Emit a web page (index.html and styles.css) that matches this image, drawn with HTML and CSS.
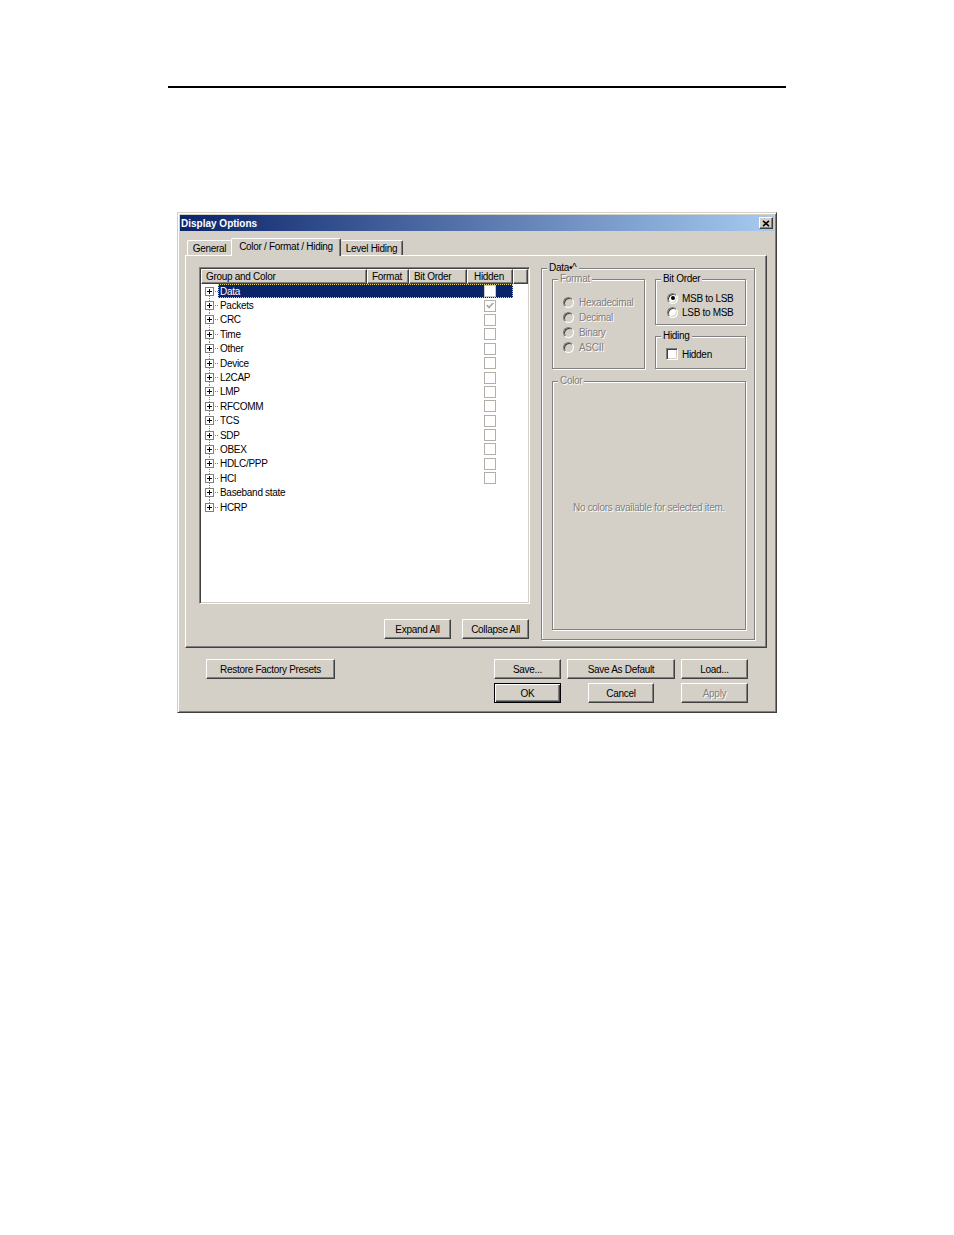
FILE: index.html
```html
<!DOCTYPE html>
<html>
<head>
<meta charset="utf-8">
<title>Display Options</title>
<link rel="stylesheet" href="styles.css">
</head>
<body>
<div class="page">
  <div class="rule"></div>
  <div class="dialog">
    <div class="titlebar">
      <span class="title">Display Options</span>
      <span class="close"><svg width="8" height="7" viewBox="0 0 8 7"><path d="M1 0.8L7 6.2M7 0.8L1 6.2" stroke="#000" stroke-width="1.6" fill="none"/></svg></span>
    </div>
    <div class="tabs">
      <div class="tab first">General</div>
      <div class="tab active">Color / Format / Hiding</div>
      <div class="tab last">Level Hiding</div>
    </div>
    <div class="panel">
      <div class="left">
        <div class="listview">
          <div class="lv-header">
            <div class="hcell h-name">Group and Color</div>
            <div class="hcell h-format">Format</div>
            <div class="hcell h-bit">Bit Order</div>
            <div class="hcell h-hidden">Hidden</div>
            <div class="hcell h-fill"></div>
          </div>
          <div class="lv-body">
            <div class="row first sel"><div class="tree"><span class="plus"></span><span class="hline"></span></div><div class="cells"><span class="lbl">Data</span><span class="c-format"></span><span class="c-bit"></span><span class="c-hidden"><span class="lcb"></span></span></div></div>
            <div class="row"><div class="tree"><span class="plus"></span><span class="hline"></span></div><div class="cells"><span class="lbl">Packets</span><span class="c-format"></span><span class="c-bit"></span><span class="c-hidden"><span class="lcb"><svg width="8" height="7" viewBox="0 0 8 7"><path d="M0.8 3.2L3 5.5L7.2 1" stroke="#a8a8a8" stroke-width="1.8" fill="none"/></svg></span></span></div></div>
            <div class="row"><div class="tree"><span class="plus"></span><span class="hline"></span></div><div class="cells"><span class="lbl">CRC</span><span class="c-format"></span><span class="c-bit"></span><span class="c-hidden"><span class="lcb"></span></span></div></div>
            <div class="row"><div class="tree"><span class="plus"></span><span class="hline"></span></div><div class="cells"><span class="lbl">Time</span><span class="c-format"></span><span class="c-bit"></span><span class="c-hidden"><span class="lcb"></span></span></div></div>
            <div class="row"><div class="tree"><span class="plus"></span><span class="hline"></span></div><div class="cells"><span class="lbl">Other</span><span class="c-format"></span><span class="c-bit"></span><span class="c-hidden"><span class="lcb"></span></span></div></div>
            <div class="row"><div class="tree"><span class="plus"></span><span class="hline"></span></div><div class="cells"><span class="lbl">Device</span><span class="c-format"></span><span class="c-bit"></span><span class="c-hidden"><span class="lcb"></span></span></div></div>
            <div class="row"><div class="tree"><span class="plus"></span><span class="hline"></span></div><div class="cells"><span class="lbl">L2CAP</span><span class="c-format"></span><span class="c-bit"></span><span class="c-hidden"><span class="lcb"></span></span></div></div>
            <div class="row"><div class="tree"><span class="plus"></span><span class="hline"></span></div><div class="cells"><span class="lbl">LMP</span><span class="c-format"></span><span class="c-bit"></span><span class="c-hidden"><span class="lcb"></span></span></div></div>
            <div class="row"><div class="tree"><span class="plus"></span><span class="hline"></span></div><div class="cells"><span class="lbl">RFCOMM</span><span class="c-format"></span><span class="c-bit"></span><span class="c-hidden"><span class="lcb"></span></span></div></div>
            <div class="row"><div class="tree"><span class="plus"></span><span class="hline"></span></div><div class="cells"><span class="lbl">TCS</span><span class="c-format"></span><span class="c-bit"></span><span class="c-hidden"><span class="lcb"></span></span></div></div>
            <div class="row"><div class="tree"><span class="plus"></span><span class="hline"></span></div><div class="cells"><span class="lbl">SDP</span><span class="c-format"></span><span class="c-bit"></span><span class="c-hidden"><span class="lcb"></span></span></div></div>
            <div class="row"><div class="tree"><span class="plus"></span><span class="hline"></span></div><div class="cells"><span class="lbl">OBEX</span><span class="c-format"></span><span class="c-bit"></span><span class="c-hidden"><span class="lcb"></span></span></div></div>
            <div class="row"><div class="tree"><span class="plus"></span><span class="hline"></span></div><div class="cells"><span class="lbl">HDLC/PPP</span><span class="c-format"></span><span class="c-bit"></span><span class="c-hidden"><span class="lcb"></span></span></div></div>
            <div class="row"><div class="tree"><span class="plus"></span><span class="hline"></span></div><div class="cells"><span class="lbl">HCI</span><span class="c-format"></span><span class="c-bit"></span><span class="c-hidden"><span class="lcb"></span></span></div></div>
            <div class="row"><div class="tree"><span class="plus"></span><span class="hline"></span></div><div class="cells"><span class="lbl">Baseband state</span></div></div>
            <div class="row last"><div class="tree"><span class="plus"></span><span class="hline"></span></div><div class="cells"><span class="lbl">HCRP</span></div></div>
          </div>
        </div>
        <div class="list-buttons">
          <button class="btn">Expand All</button>
          <button class="btn">Collapse All</button>
        </div>
      </div>
      <div class="group data-group">
        <span class="legend">Data•^</span>
        <div class="data-grid">
          <div class="group format-group disabled">
            <span class="legend">Format</span>
            <div class="opts">
              <div class="opt"><span class="radio"></span>Hexadecimal</div>
              <div class="opt"><span class="radio"></span>Decimal</div>
              <div class="opt"><span class="radio"></span>Binary</div>
              <div class="opt"><span class="radio"></span>ASCII</div>
            </div>
          </div>
          <div class="group bit-group">
            <span class="legend">Bit Order</span>
            <div class="opts">
              <div class="opt"><span class="radio on"></span>MSB to LSB</div>
              <div class="opt"><span class="radio"></span>LSB to MSB</div>
            </div>
          </div>
          <div class="group hiding-group">
            <span class="legend">Hiding</span>
            <div class="opts">
              <div class="opt"><span class="check"></span>Hidden</div>
            </div>
          </div>
        </div>
        <div class="group color-group disabled">
          <span class="legend">Color</span>
          <div class="nocolor">No colors available for selected item.</div>
        </div>
      </div>
    </div>
    <div class="footer">
      <button class="btn b-restore">Restore Factory Presets</button>
      <button class="btn b-save">Save...</button>
      <button class="btn b-default">Save As Default</button>
      <button class="btn b-load">Load...</button>
      <button class="btn b-ok">OK</button>
      <button class="btn b-cancel">Cancel</button>
      <button class="btn b-apply" disabled>Apply</button>
    </div>
  </div>
</div>
</body>
</html>
```

FILE: styles.css
```css
* { box-sizing: border-box; }
body {
  margin: 0;
  background: #fff;
  font-family: "Liberation Sans", Arial, sans-serif;
  font-size: 10px;
  letter-spacing: -0.3px;
  color: #000;
}
.page { padding: 86px 0 0 168px; }
.rule { width: 618px; height: 2px; background: #000; }

.dialog {
  margin: 124px 0 0 9px;
  width: 600px;
  height: 501px;
  background: #d4d0c8;
  border: 1px solid;
  border-color: #d4d0c8 #404040 #404040 #d4d0c8;
  box-shadow: inset 1px 1px 0 #fff, inset -1px -1px 0 #808080;
  padding: 2px;
}
.titlebar {
  height: 16px;
  display: flex;
  align-items: center;
  justify-content: space-between;
  padding: 0 1px 0 1px;
  background: linear-gradient(to right, #0a246a, #a6caf0);
}
.title { color: #fff; font-weight: bold; letter-spacing: 0; }
.close {
  width: 14px; height: 12px;
  display: flex; align-items: center; justify-content: center;
  background: #d4d0c8;
  border: 1px solid;
  border-color: #fff #404040 #404040 #fff;
  box-shadow: inset -1px -1px 0 #808080;
}

.tabs { display: flex; align-items: flex-end; height: 17px; margin: 7px 0 0 7px; }
.tab {
  height: 15px;
  display: flex; align-items: center; justify-content: center;
  border: 1px solid;
  border-bottom: 0;
  border-color: #fff #404040 transparent #fff;
  border-radius: 2px 2px 0 0;
  box-shadow: inset -1px 0 0 #808080;
}
.tab.first { width: 44px; border-right: 0; box-shadow: none; }
.tab.active {
  width: 110px; height: 18px;
  margin-bottom: -1px;
  position: relative; z-index: 1;
  background: #d4d0c8;
  padding-bottom: 2px;
}
.tab.last { width: 62px; border-left: 0; }

.panel {
  margin-left: 5px;
  width: 582px; height: 393px;
  border: 1px solid;
  border-color: #fff #404040 #404040 #fff;
  box-shadow: inset -1px -1px 0 #808080;
  padding: 11px 0 0 13px;
  display: flex;
  align-items: flex-start;
}
.left { display: flex; flex-direction: column; }

.listview {
  width: 331px; height: 337px;
  background: #fff;
  border: 1px solid;
  border-color: #808080 #fff #fff #808080;
  box-shadow: inset 1px 1px 0 #404040, inset -1px -1px 0 #d4d0c8;
  padding: 1px;
}
.lv-header { display: flex; height: 15px; }
.hcell {
  height: 15px;
  background: #d4d0c8;
  border: 1px solid;
  border-color: #fff #404040 #404040 #fff;
  box-shadow: inset -1px -1px 0 #808080;
  padding-left: 4px;
  display: flex; align-items: center;
  white-space: nowrap;
}
.h-name { width: 166px; }
.h-format { width: 42px; }
.h-bit { width: 58px; }
.h-hidden { width: 46px; padding-left: 6px; }
.h-fill { flex: 1; }

.row { display: flex; height: 14.4px; }
.tree {
  width: 17px;
  display: flex; align-items: center;
  padding-left: 4px;
  background: linear-gradient(#808080 1px, transparent 1px) 8px 0 / 1px 2px repeat-y;
}
.row.first .tree {
  background: linear-gradient(#fff, #fff) 0 0 / 100% 7px no-repeat,
              linear-gradient(#808080 1px, transparent 1px) 8px 0 / 1px 2px repeat-y;
}
.row.last .tree {
  background: linear-gradient(#fff, #fff) 0 100% / 100% 7px no-repeat,
              linear-gradient(#808080 1px, transparent 1px) 8px 0 / 1px 2px repeat-y;
}
.plus {
  width: 9px; height: 9px;
  border: 1px solid #808080;
  background: #fff;
  display: grid; place-items: center;
  flex: none;
}
.plus::before, .plus::after { content: ""; grid-area: 1 / 1; background: #000; }
.plus::before { width: 5px; height: 1px; }
.plus::after { width: 1px; height: 5px; }
.hline {
  width: 4px; height: 1px;
  background: linear-gradient(to right, #808080 1px, transparent 1px) 1px 0 / 2px 1px repeat-x;
}
.cells { display: flex; width: 295px; align-items: center; white-space: nowrap; }
.row.sel .cells {
  background: #0a246a;
  color: #fff;
  outline: 1px dotted #e6d67a;
  outline-offset: -1px;
}
.lbl { width: 149px; padding-left: 2px; }
.c-format { width: 42px; }
.c-bit { width: 58px; }
.c-hidden { width: 46px; display: flex; justify-content: center; }
.lcb {
  width: 12px; height: 12px;
  border: 1px solid #b4b0a8;
  background: #fff;
  display: flex; align-items: center; justify-content: center;
}
.row.sel .lcb { border-color: #c8c8c8; }

.list-buttons {
  display: flex; justify-content: flex-end; gap: 11px;
  margin-top: 15px; padding-right: 1px;
}
.list-buttons .btn { width: 67px; height: 20px; }

.btn {
  font: inherit;
  letter-spacing: inherit;
  color: #000;
  background: #d4d0c8;
  border: 1px solid;
  border-color: #fff #404040 #404040 #fff;
  box-shadow: inset -1px -1px 0 #808080;
  padding: 0;
  height: 20px;
  white-space: nowrap;
}
.btn:disabled { color: #808080; text-shadow: 1px 1px 0 #fff; }

.group {
  position: relative;
  border: 1px solid #808080;
  box-shadow: 1px 1px 0 #fff, inset 1px 1px 0 #fff;
}
.legend {
  position: absolute;
  top: -7px; left: 5px;
  padding: 0 2px;
  background: #d4d0c8;
  line-height: 12px;
  white-space: nowrap;
}
.data-group {
  width: 214px; height: 372px;
  margin: 1px 0 0 11px;
  padding: 10px 0 0 10px;
}
.data-grid {
  display: grid;
  grid-template-columns: 93px 91px;
  grid-template-rows: 46px 33px;
  column-gap: 10px;
  row-gap: 11px;
}
.format-group { grid-row: 1 / span 2; }
.opts { display: flex; flex-direction: column; }
.opt { display: flex; align-items: center; gap: 5px; height: 15px; white-space: nowrap; }
.format-group .opts { padding: 15px 0 0 10px; }
.bit-group .opts { padding: 11px 0 0 11px; }
.bit-group .opt { height: 14.3px; gap: 4px; }
.hiding-group .opts { padding: 10px 0 0 10px; }
.hiding-group .opt { height: 14px; gap: 4px; }

.radio {
  width: 11px; height: 11px;
  border-radius: 50%;
  border: 1px solid;
  border-color: #808080 #fff #fff #808080;
  box-shadow: inset 1px 1px 0 #404040, inset -1px -1px 0 #d4d0c8;
  background: #fff;
  display: grid; place-items: center;
  flex: none;
}
.radio.on::after { content: ""; width: 4px; height: 4px; border-radius: 50%; background: #000; }
.disabled .radio { background: #d4d0c8; }
.check {
  width: 12px; height: 12px;
  border: 1px solid;
  border-color: #808080 #fff #fff #808080;
  box-shadow: inset 1px 1px 0 #404040, inset -1px -1px 0 #d4d0c8;
  background: #fff;
  flex: none;
}
.disabled .opt, .disabled .legend, .nocolor { color: #808080; text-shadow: 1px 1px 0 #fff; }

.color-group {
  width: 194px; height: 249px;
  margin-top: 12px;
  display: flex; align-items: center; justify-content: center;
  padding-top: 4px;
}

.footer {
  display: grid;
  grid-template-columns: 129px 159px 67px 6px 108px 6px 67px;
  grid-template-rows: 20px 20px;
  row-gap: 4px;
  margin: 11px 0 0 26px;
}
.b-restore { grid-column: 1; grid-row: 1; }
.b-save { grid-column: 3; grid-row: 1; }
.b-default { grid-column: 5; grid-row: 1; }
.b-load { grid-column: 7; grid-row: 1; }
.b-ok {
  grid-column: 3; grid-row: 2;
  border-color: #000;
  box-shadow: inset 1px 1px 0 #fff, inset -1px -1px 0 #404040, inset -2px -2px 0 #808080;
}
.b-cancel { grid-column: 5; grid-row: 2; justify-self: center; width: 66px; }
.b-apply { grid-column: 7; grid-row: 2; }
```
